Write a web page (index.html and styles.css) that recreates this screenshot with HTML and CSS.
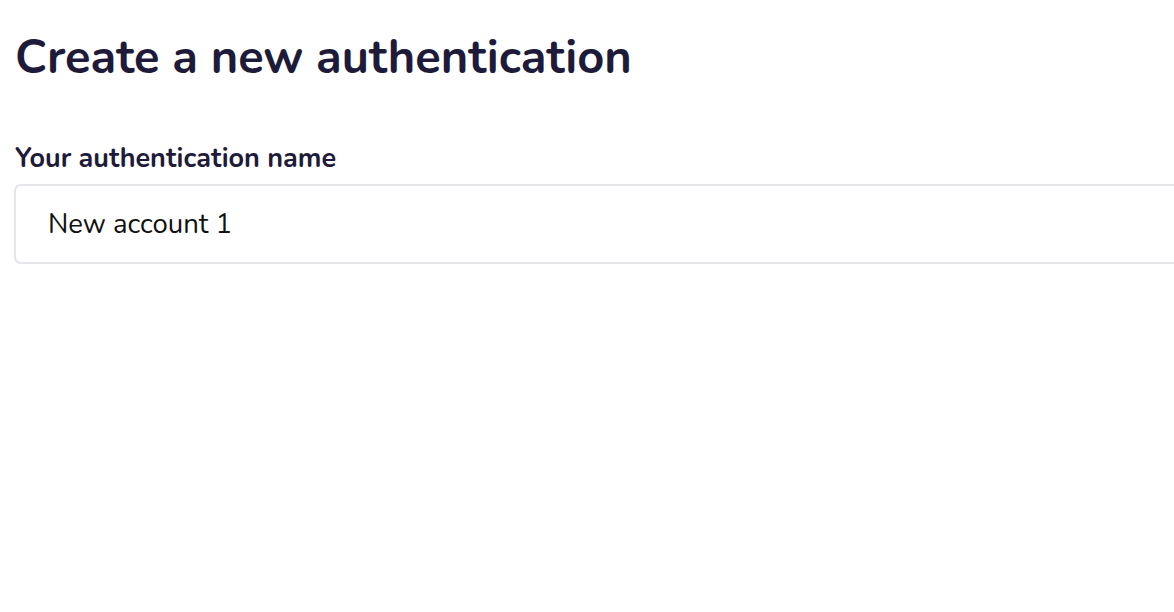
FILE: index.html
```html
<!DOCTYPE html>
<html lang="en">
<head>
    <meta charset="UTF-8">
    <meta name="viewport" content="width=device-width, initial-scale=1.0">
    <title>Create authentication</title>
    <link rel="stylesheet" href="styles.css">
</head>
<body>

    <div class="container">
        <h1>Create a new authentication</h1>
        <form class="auth-form">
            <label for="authName">Your authentication name</label>
            <input type="text" id="authName" name="authName" value="New account 1">
        </form>
    </div>

</body>
</html>
```

FILE: styles.css
```css
body {
    margin: 0;
    font-family: "Nunito", Lato, "Open Sans", sans-serif;
    background: #fff;
    color: #1e1b3a;
    overflow: hidden;
}
.container {
    padding: 26px 0 0 14px;
    overflow: hidden;
}
h1 {
    font-size: 47px;
    font-weight: 700;
    margin: 0 0 0 1px;
    line-height: 64px;
}
.auth-form {
    display: flex;
    flex-direction: column;
    margin-top: 51px;
}
label {
    font-size: 27px;
    font-weight: 700;
    margin-left: 1px;
    line-height: 36px;
    margin-bottom: 7px;
}
input[type="text"] {
    width: calc(100% + 200px);
    height: 80px;
    box-sizing: border-box;
    border: 2px solid #e6e6ea;
    border-radius: 7px;
    padding: 0 32px;
    font-family: inherit;
    font-size: 27.5px;
    color: #111;
    outline: none;
}
```
